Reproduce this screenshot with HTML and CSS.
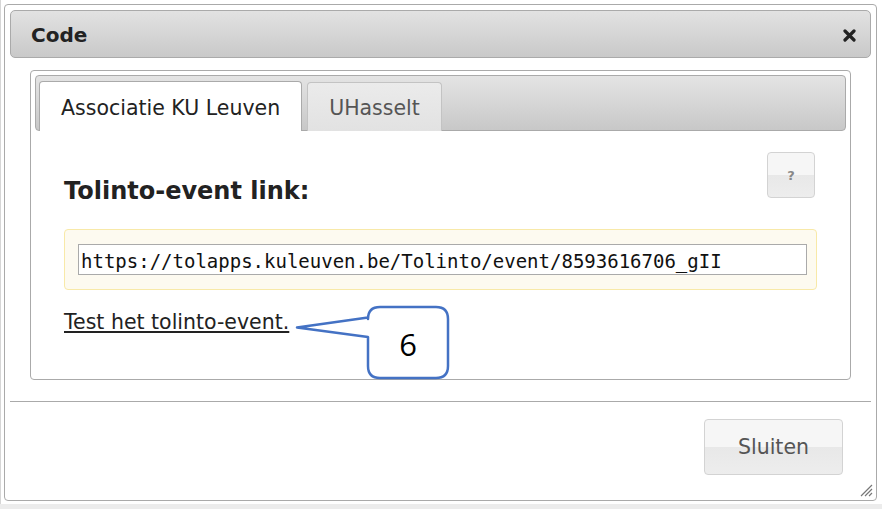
FILE: index.html
```html
<!DOCTYPE html>
<html>
<head>
<meta charset="utf-8">
<link rel="stylesheet" href="styles.css">
</head>
<body>
<div class="page">
  <div class="dialog">
    <div class="titlebar">
      <span class="title">Code</span>
      <svg class="close" width="13" height="13" viewBox="0 0 13 13">
        <path d="M2 2 L11 11 M11 2 L2 11" stroke="#222" stroke-width="3.2" stroke-linecap="round"/>
      </svg>
    </div>
    <div class="content">
      <div class="tabs">
        <div class="tabnav">
          <div class="tab active">Associatie KU Leuven</div>
          <div class="tab">UHasselt</div>
        </div>
        <div class="tabpanel">
          <div class="headrow">
            <h2 class="heading">Tolinto-event link:</h2>
            <button class="help">?</button>
          </div>
          <div class="highlight">
            <div class="linkinput" role="textbox">https://tolapps.kuleuven.be/Tolinto/event/8593616706_gII</div>
          </div>
          <a class="testlink" href="#">Test het tolinto-event.</a>
        </div>
      </div>
      <svg class="callout" width="170" height="86" viewBox="290 300 170 86">
        <path d="M380 307 H436 Q448 307 448 319 V366 Q448 378 436 378 H380 Q368 378 368 366 V337 L297 327.5 L368 317.5 V319 Q368 307 380 307 Z" fill="#fff" stroke="#4472c4" stroke-width="2.5" stroke-linejoin="round"/>
        <text x="408" y="356" text-anchor="middle" class="callnum">6</text>
      </svg>
    </div>
    <div class="buttonpane">
      <button class="btn">Sluiten</button>
    </div>
    <svg class="grip" width="14" height="14" viewBox="0 0 14 14">
      <path d="M13 2 L2 13 M13 6 L6 13 M13 10 L10 13" stroke="#777" stroke-width="1.2"/>
    </svg>
  </div>
</div>
</body>
</html>
```
FILE: styles.css
```css
html, body {
  margin: 0;
  padding: 0;
  background: #ececec;
}
.page {
  width: 882px;
  height: 504px;
  background: #fff;
  position: relative;
  font-family: "DejaVu Sans", Verdana, sans-serif;
  border-left: 1px solid #d6d6d6;
  box-sizing: border-box;
  padding: 4px 0 0 3px;
}
.dialog {
  position: relative;
  width: 873px;
  height: 497px;
  box-sizing: border-box;
  border: 1px solid #aaa;
  border-radius: 4px;
  background: #fff;
  padding: 5px;
  display: flex;
  flex-direction: column;
}
.titlebar {
  height: 48px;
  flex: none;
  box-sizing: border-box;
  border: 1px solid #aaa;
  border-radius: 5px;
  background: linear-gradient(#e2e2e2, #c9c9c9);
  display: flex;
  align-items: center;
  justify-content: space-between;
  padding: 2px 14px 0 20px;
}
.title {
  font-weight: bold;
  font-size: 20px;
  color: #222;
}
.close {
  display: block;
}
.content {
  position: relative;
  padding: 12px 20px 0 20px;
}
.tabs {
  border: 1px solid #aaa;
  border-radius: 4px;
  padding: 4px;
  height: 310px;
  box-sizing: border-box;
}
.tabnav {
  height: 56px;
  box-sizing: border-box;
  border: 1px solid #aaa;
  border-radius: 4px;
  background: linear-gradient(#e4e4e4, #c8c8c8);
  display: flex;
  align-items: flex-end;
  gap: 5px;
  padding: 0 0 0 3px;
}
.tab {
  height: 49px;
  box-sizing: border-box;
  border: 1px solid #c3c3c3;
  border-bottom: none;
  border-radius: 4px 4px 0 0;
  background: linear-gradient(#ebebeb, #e2e2e2);
  font-size: 20.5px;
  color: #555;
  padding: 13px 21px 0 21px;
  margin-bottom: -1px;
  white-space: nowrap;
}
.tab.active {
  height: 50px;
  background: #fff;
  color: #222;
  border-color: #aaa;
  padding-top: 14px;
}
.tabpanel {
  padding: 21px 29px 0 29px;
}
.headrow {
  display: flex;
  justify-content: space-between;
  align-items: flex-start;
  height: 77px;
}
.heading {
  margin: 25px 0 0 0;
  font-size: 24px;
  font-weight: bold;
  color: #222;
  line-height: 28px;
}
.help {
  width: 48px;
  height: 46px;
  border: 1px solid #d3d3d3;
  border-radius: 4px;
  background: linear-gradient(#f6f6f6 50%, #e8e8e8 50%, #ededed);
  color: #888;
  font-weight: bold;
  font-size: 13px;
  font-family: "DejaVu Sans", sans-serif;
  margin-right: 2px;
  padding: 0;
}
.highlight {
  width: 753px;
  height: 61px;
  box-sizing: border-box;
  border: 1px solid #f8e9a8;
  border-radius: 4px;
  background: #fdfaf0;
  padding: 14px 0 0 13px;
}
.linkinput {
  width: 729px;
  height: 31px;
  box-sizing: border-box;
  border: 1px solid #aaa;
  background: #fff;
  font-family: "DejaVu Sans Mono", monospace;
  font-size: 19px;
  line-height: 26px;
  color: #111;
  padding: 3px 2px 0 2px;
  white-space: nowrap;
  overflow: hidden;
}
.testlink {
  display: inline-block;
  margin-top: 20px;
  font-size: 20.5px;
  color: #222;
  text-decoration: underline;
}
.callout {
  position: absolute;
  left: 280px;
  top: 242px;
  overflow: visible;
}
.callnum {
  font-family: "Open Sans", "Liberation Sans", sans-serif;
  font-size: 31px;
  fill: #000;
}
.buttonpane {
  margin-top: 21px;
  border-top: 1px solid #aaa;
  display: flex;
  justify-content: flex-end;
  padding: 17px 28px 0 0;
}
.btn {
  width: 139px;
  height: 56px;
  border: 1px solid #d3d3d3;
  border-radius: 4px;
  background: linear-gradient(#f6f6f6 50%, #e8e8e8 50%, #ededed);
  font-family: "DejaVu Sans", sans-serif;
  font-size: 20.5px;
  color: #555;
}
.grip {
  position: absolute;
  right: 3px;
  bottom: 3px;
}
```
